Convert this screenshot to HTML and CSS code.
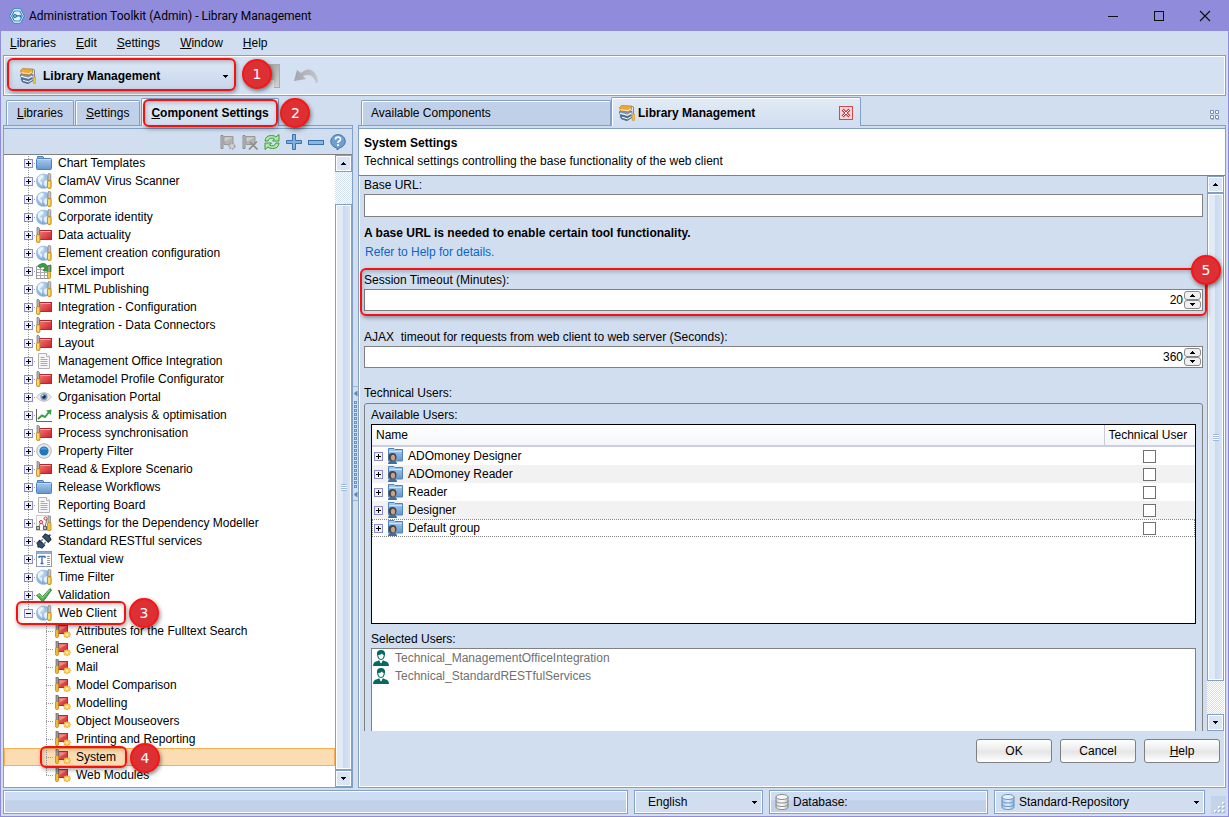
FILE: index.html
```html
<!DOCTYPE html>
<html lang="en">
<head>
<meta charset="utf-8">
<title>Administration Toolkit (Admin) - Library Management</title>
<link rel="stylesheet" href="styles.css">
</head>
<body>
<svg class="defs" aria-hidden="true">
  <defs>
    <linearGradient id="gBlue" x1="0" y1="0" x2="0" y2="1"><stop offset="0" stop-color="#a9cbec"/><stop offset="1" stop-color="#6397cd"/></linearGradient>
    <linearGradient id="gRed" x1="0" y1="0" x2="1" y2="1"><stop offset="0" stop-color="#f07a75"/><stop offset="1" stop-color="#cf1f2a"/></linearGradient>
    <radialGradient id="gGlobe" cx=".35" cy=".3" r=".8"><stop offset="0" stop-color="#c5dcf2"/><stop offset="1" stop-color="#6d9fd2"/></radialGradient>
    <linearGradient id="gGray" x1="0" y1="0" x2="1" y2="0"><stop offset="0" stop-color="#d8d8d8"/><stop offset=".5" stop-color="#fff"/><stop offset="1" stop-color="#c2c2c2"/></linearGradient>
    <linearGradient id="gDb" x1="0" y1="0" x2="1" y2="0"><stop offset="0" stop-color="#9fc2e6"/><stop offset=".5" stop-color="#e4f0fb"/><stop offset="1" stop-color="#8fb6de"/></linearGradient>
    <linearGradient id="gSave" x1="0" y1="0" x2="1" y2="1"><stop offset="0" stop-color="#8f8f8f"/><stop offset="1" stop-color="#d6d6d6"/></linearGradient>
    <linearGradient id="gUndo" x1="0" y1="0" x2="1" y2="0"><stop offset="0" stop-color="#a3a5a7"/><stop offset="1" stop-color="#c3c6c9"/></linearGradient>
  </defs>
  <symbol id="folder" viewBox="0 0 16 16"><path d="M1.500 4V1.500h5.500l1 2" fill="#8db7e2" stroke="#4d7fb8"/><rect x=".5" y="3.500" width="15" height="11" rx="1" fill="url(#gBlue)" stroke="#4f82bb"/><path d="M1.500 4.500h13" stroke="#c6def4"/></symbol>
  <symbol id="globe" viewBox="0 0 16 16"><circle cx="7.500" cy="8.300" r="7.300" fill="url(#gGlobe)" stroke="#9bbbdd" stroke-width=".6"/><path d="M2 4.500l3-2.500 3 .5-1 2.500-2 1-1 2 2 1v4l-2-2-2-3zM8.500 8l3-1v6l-2 1-2-3z" fill="#f4f9fd" opacity=".85"/><path d="M12 1l1-.6h.8l1 .8V8H12z" fill="#c4c4c4" stroke="#7d7d7d" stroke-width=".7"/><rect x="11.500" y="7.500" width="3.700" height="8" rx="1.200" fill="#f2c445" stroke="#bd871b" stroke-width=".8"/><path d="M13 9v5" stroke="#fff0a9"/></symbol>
  <symbol id="red" viewBox="0 0 16 16"><rect x="3.500" y="3.500" width="12" height="9" fill="url(#gRed)" stroke="#b9252c"/><path d="M4.500 4.500h10" stroke="#fab1ab"/><path d="M1 .5h1.500l1 1V8H1z" fill="#b5b5b5" stroke="#6d6d6d" stroke-width=".7"/><rect x=".5" y="7.500" width="3.500" height="8" rx="1.200" fill="#f0bd3a" stroke="#bd871b" stroke-width=".8"/><path d="M2 9v5" stroke="#fff0a9"/></symbol>
  <symbol id="redgear" viewBox="0 0 16 16"><rect x="3.500" y="2.500" width="9" height="8" fill="url(#gRed)" stroke="#b9252c"/><path d="M4.500 3.500h7l-7 4z" fill="#f08a84"/><path d="M1 0h1.500l1 1v6H1z" fill="#9a9a9a" stroke="#666" stroke-width=".7"/><rect x=".5" y="6.500" width="3" height="8" rx="1.200" fill="#efb935" stroke="#bd871b" stroke-width=".8"/><path d="M12 8.500l1 1 1.500-.3.2 1.300 1.100.9-1.100 1 .1 1.400-1.600.1-1.100 1.100-1.200-1.100-1.600.2v-1.500l-1.100-1.100 1.100-1.100.2-1.400 1.500.3z" fill="#fbd05c" stroke="#dba63c" stroke-width=".7"/><circle cx="12" cy="11.800" r="1" fill="#fff3c4"/></symbol>
  <symbol id="page" viewBox="0 0 16 16"><path d="M2.500.5h8l3 3v12h-11z" fill="#f6f6f6" stroke="#b3b3b3"/><path d="M10.500.5v3h3" fill="#fff" stroke="#b3b3b3"/><path d="M4.500 4.500h4m-4 2h7m-7 2h7m-7 2h7m-7 2h7" stroke="#aaa"/></symbol>
  <symbol id="eye" viewBox="0 0 16 16"><path d="M.5 8Q4 3.500 8 3.500T15.500 8Q12 12.500 8 12.500T.5 8z" fill="#ececec" stroke="#c4c4c4"/><circle cx="8" cy="7.800" r="3.600" fill="#7fa0c4"/><circle cx="8" cy="7.800" r="1.900" fill="#1d2b40"/><circle cx="6.800" cy="6.600" r=".8" fill="#fff"/></symbol>
  <symbol id="chart" viewBox="0 0 16 16"><path d="M.5 2v12.500H16" fill="none" stroke="#666"/><path d="M2 12l4-3.500 3 1.500 4-5" fill="none" stroke="#3ba047" stroke-width="2"/><path d="M10 3.500l5.500-1-.5 5.500z" fill="#3ba047"/></symbol>
  <symbol id="target" viewBox="0 0 16 16"><circle cx="8" cy="8" r="7.300" fill="#e8e8e8" stroke="#b5b5b5"/><circle cx="8" cy="8" r="4.600" fill="#1f76bd"/><path d="M4.500 6.500a4 4 0 0 1 7 0z" fill="#4e9fdb"/></symbol>
  <symbol id="excel" viewBox="0 0 16 16"><rect x=".5" y="3.500" width="12" height="12" fill="#fff" stroke="#999"/><path d="M1 6.500h11M1 9.500h11M1 12.500h11M4.500 5v10M8.500 5v10" stroke="#aaa"/><path d="M2 2.500Q9-2 11 3l4-1v7L7 7.500l2-2Q8 2.500 4 5z" fill="#38a044" stroke="#23752d" stroke-width=".7"/><path d="M12 3h2v6h-2z" fill="#aaa" stroke="#666" stroke-width=".6"/><rect x="11.500" y="8.500" width="3" height="7" rx="1" fill="#f2c445" stroke="#bd871b" stroke-width=".8"/></symbol>
  <symbol id="depend" viewBox="0 0 16 16"><path d="M.5.500h12v15H.5z" fill="#fafafa" stroke="#ccc"/><path d="M2 13l3-6 4 5 2-8" fill="none" stroke="#777"/><rect x=".5" y="11.500" width="3" height="3" fill="#bbb" stroke="#666"/><rect x="7.500" y="11.500" width="3" height="3" fill="#bbb" stroke="#666"/><circle cx="5" cy="7" r="1.500" fill="#fff" stroke="#d92a2a"/><circle cx="9.500" cy="3.500" r="1.500" fill="#fff" stroke="#d92a2a"/><path d="M12 1h2.500v7H12z" fill="#bbb" stroke="#777" stroke-width=".6"/><rect x="11.500" y="7.500" width="3.500" height="8" rx="1" fill="#f2c445" stroke="#bd871b" stroke-width=".8"/></symbol>
  <symbol id="plug" viewBox="0 0 16 16"><g transform="rotate(-45 8 8)"><path d="M-1 8h3M14 8h3" stroke="#355577" stroke-width="2"/><path d="M1.500 4.500h4v7h-4q-2-3.500 0-7zM10 4h4q2 4 0 8h-4z" fill="#34506f" stroke="#1f2d3f"/><path d="M5.500 6h3M5.500 10h3" stroke="#888" stroke-width="1.500"/></g></symbol>
  <symbol id="textual" viewBox="0 0 16 16"><rect x=".5" y=".5" width="15" height="15" fill="#fff" stroke="#8c9db0"/><path d="M1 2h14" stroke="#8cb0d7" stroke-width="2"/><path d="M3 5.500h6M6 5.500v7M4.500 12.500h3M3 5v2m6-2v2" stroke="#3f6da3" stroke-width="1.300"/><path d="M11 5.500h3m-3 2h3m-3 2h3m-3 2h3m-3 2h3" stroke="#999"/></symbol>
  <symbol id="check" viewBox="0 0 16 16"><path d="M.5 8.500l3-2 2.900 3.200L14 1.500l1.700 1.400L6.800 15z" fill="#4fae50" stroke="#2c7f34" stroke-width=".8"/><path d="M2 8.500l1.600-.8 2.900 3.500L13.500 3" fill="none" stroke="#a6dc9e" stroke-width=".9"/></symbol>
  <symbol id="ufolder" viewBox="0 0 16 16"><path d="M1.500 3V.5h5.500l1 1h7.500v11.500H1.500z" fill="url(#gBlue)" stroke="#4f82bb"/><path d="M2 3.500h13" stroke="#d2e5f7"/><path d="M1 16q0-3.500 4.500-3.500T10 16z" fill="#3e6f9e"/><circle cx="5.500" cy="9" r="4" fill="#4b4540"/><ellipse cx="6" cy="9.600" rx="2.100" ry="2.900" fill="#c8a283"/></symbol>
  <symbol id="user" viewBox="0 0 16 16"><path d="M4 4.500Q3.500 0 8 0t4 4.500Q11.500 9.700 8 10 4.500 9.700 4 4.500z" fill="#046a62"/><path d="M5.200 5q2.300 0 3.800-1.500Q10 5 10.800 5q-.5 3.800-2.800 4.100Q5.700 8.800 5.200 5z" fill="#fff"/><path d="M0 16q0-4 4-4.800l2-1L8 13l2-2.800 2 1q4 .8 4 4.800z" fill="#046a62"/><path d="M6.700 11.500L8 13.500l1.300-2z" fill="#fff"/></symbol>
  <symbol id="library" viewBox="0 0 16 16"><path d="M1 11l2-2 9.500 1.500v2.300L8 15.700 2.500 14z" fill="#54749f" stroke="#36547d" stroke-width=".6"/><path d="M3 12.300l5.500 1.500 4-2.300" fill="none" stroke="#fff" stroke-width="1"/><path d="M0 7l2.500-1.500 10.500 1v2l-4.500 3.300L1 9.500z" fill="#7c97ba" stroke="#40608d" stroke-width=".6"/><path d="M1 8.200l7.500 2L12.500 8" fill="none" stroke="#fff" stroke-width="1.100"/><path d="M.5 2.500l2-2L12.500 1v3.500L9.500 7 1.500 6z" fill="#f0a830" stroke="#a87224" stroke-width=".6"/><path d="M1.500 4.700l7.500 1 3-2" fill="none" stroke="#fff0c5" stroke-width="1"/><path d="M12.500 1l2 1v7" fill="none" stroke="#888"/><rect x="13.200" y="9" width="2.600" height="6.500" rx="1" fill="#f2c445" stroke="#bd871b" stroke-width=".6"/></symbol>
  <symbol id="dbgray" viewBox="0 0 16 16"><path d="M2 3v10q0 2.500 6 2.500t6-2.500V3" fill="url(#gGray)" stroke="#8a8a8a"/><ellipse cx="8" cy="3" rx="6" ry="2.500" fill="#f8f8f8" stroke="#8a8a8a"/><path d="M2 6.500Q2 9 8 9t6-2.500M2 10q0 2.500 6 2.500t6-2.500" fill="none" stroke="#8a8a8a"/></symbol>
  <symbol id="dbblue" viewBox="0 0 16 16"><path d="M2 3v10q0 2.500 6 2.500t6-2.500V3" fill="url(#gDb)" stroke="#6795c6"/><ellipse cx="8" cy="3" rx="6" ry="2.500" fill="#e6f1fb" stroke="#6795c6"/><path d="M2 6.500Q2 9 8 9t6-2.500M2 10q0 2.500 6 2.500t6-2.500" fill="none" stroke="#6795c6"/></symbol>
  <symbol id="toolgear" viewBox="0 0 16 16"><path d="M4 2.500h9v8H4z" fill="#b4b4b4" stroke="#999"/><path d="M4.500 3.500h8l-8 4z" fill="#cfcfcf"/><path d="M1 1.500h2v13H1z" fill="#c4c4c4" stroke="#8c8c8c"/><circle cx="12" cy="12" r="2.800" fill="#d0d0d0" stroke="#a2a2a2" stroke-dasharray="1.800 .8" stroke-width="1.500"/></symbol>
  <symbol id="tooldel" viewBox="0 0 16 16"><path d="M4 2.500h9v8H4z" fill="#b4b4b4" stroke="#999"/><path d="M4.500 3.500h8l-8 4z" fill="#cfcfcf"/><path d="M1 1.500h2v13H1z" fill="#c4c4c4" stroke="#8c8c8c"/><path d="M8 8l7.500 7.500M15 7.500L7 15.500" stroke="#8f8f8f" stroke-width="1.700"/></symbol>
  <symbol id="refresh" viewBox="0 0 16 16"><path d="M1 7Q1.500 1.500 7.500 1.500q3 0 4.500 1.500l3-2.500V7H8.500l2-2Q6 2.500 4 7z" fill="#b5e4a5" stroke="#3f9b44"/><path d="M15 9q-.5 5.500-6.500 5.500-3 0-4.500-1.500l-3 2.500V9h6.500l-2 2q4.500 2.500 6.500-2z" fill="#b5e4a5" stroke="#3f9b44"/></symbol>
  <symbol id="plus" viewBox="0 0 16 16"><path d="M6.500.500h3v6h6v3h-6v6h-3v-6h-6v-3h6z" fill="#7fb0df" stroke="#3c72ac"/></symbol>
  <symbol id="minus" viewBox="0 0 16 16"><rect x=".5" y="6.500" width="15" height="4" fill="#8ab8e3" stroke="#3c72ac"/></symbol>
  <symbol id="help" viewBox="0 0 16 16"><path d="M8 .5a7.500 6.800 0 0 1 2 13.300L7 16v-2A7.500 6.800 0 0 1 8 .5z" fill="#6d9fd2" stroke="#356698" stroke-width=".8"/><path d="M5.500 5.500Q5.500 3 8 3t2.500 2.200Q10.500 6.500 9 7.300 8 8 8 9" fill="none" stroke="#fff" stroke-width="1.700"/><circle cx="8" cy="11.200" r="1.100" fill="#fff"/></symbol>
</svg>

<div class="window">
  <header class="titlebar">
    <svg class="icon" viewBox="0 0 16 16"><path d="M4.500.8h7L15.300 8l-3.800 7.200h-7L.7 8z" fill="#fff" stroke="#2b83c4" stroke-width="1"/><path d="M5.200 3h5.600l2.500 5-2.500 5H5.200L2.700 8z" fill="#e4f1fa" stroke="#2b83c4" stroke-width="1.200"/><circle cx="6" cy="8" r="1.400" fill="none" stroke="#1b6ba8" stroke-width="1.200"/><path d="M7.500 7.800h4v1.700" fill="none" stroke="#1b6ba8" stroke-width="1.200"/></svg>
    <h1 class="title">Administration Toolkit (Admin) - Library Management</h1>
    <div class="winbuttons">
      <button type="button" aria-label="Minimize"><svg viewBox="0 0 12 12"><path d="M1 6.500h10" stroke="#111"/></svg></button>
      <button type="button" aria-label="Maximize"><svg viewBox="0 0 12 12"><rect x="1.500" y="1.500" width="9" height="9" fill="none" stroke="#111"/></svg></button>
      <button type="button" aria-label="Close"><svg viewBox="0 0 12 12"><path d="M1 1l10 10M11 1L1 11" stroke="#111" stroke-width="1.200"/></svg></button>
    </div>
  </header>

  <nav class="menubar">
    <button type="button"><u>L</u>ibraries</button>
    <button type="button"><u>E</u>dit</button>
    <button type="button"><u>S</u>ettings</button>
    <button type="button"><u>W</u>indow</button>
    <button type="button"><u>H</u>elp</button>
  </nav>

  <div class="toolbar">
    <div class="picker">
      <svg class="icon"><use href="#library"/></svg>
      <select class="plain bold" aria-label="Module"><option>Library Management</option></select>
      <span class="mark mark-picker"><b class="badge">1</b></span>
    </div>
    <button type="button" class="save" aria-label="Save"><svg viewBox="0 0 24 24"><rect x=".5" y=".5" width="23" height="23" fill="url(#gSave)" stroke="#aaa"/><path d="M6 16h12v8H6z" fill="#ddd"/></svg></button>
    <button type="button" class="undo" aria-label="Undo"><svg viewBox="0 0 26 18"><path d="M1 14L4 3l4 3Q16-1 22 6q3 4 3 9l-2 1Q20 5 10 9l3 3z" fill="url(#gUndo)"/></svg></button>
  </div>

  <main class="main">
    <section class="left">
      <div class="tabs" role="tablist">
        <button type="button" class="tab" role="tab"><u>L</u>ibraries</button>
        <button type="button" class="tab" role="tab"><u>S</u>ettings</button>
        <button type="button" class="tab active" role="tab" aria-selected="true"><span><u>C</u>omponent Settings</span><span class="mark mark-tab"><b class="badge">2</b></span></button>
      </div>
      <div class="panel">
        <div class="treetools">
          <button type="button" aria-label="Configure"><svg class="icon"><use href="#toolgear"/></svg></button>
          <button type="button" aria-label="Delete configuration"><svg class="icon"><use href="#tooldel"/></svg></button>
          <button type="button" aria-label="Refresh"><svg class="icon"><use href="#refresh"/></svg></button>
          <button type="button" aria-label="Expand all"><svg class="icon"><use href="#plus"/></svg></button>
          <button type="button" aria-label="Collapse all"><svg class="icon"><use href="#minus"/></svg></button>
          <button type="button" aria-label="Help"><svg class="icon"><use href="#help"/></svg></button>
        </div>
        <div class="treewrap">
          <ul class="tree">
            <li class="node"><button type="button" class="exp" aria-label="Expand"></button><svg class="icon"><use href="#folder"/></svg><span>Chart Templates</span></li>
            <li class="node"><button type="button" class="exp" aria-label="Expand"></button><svg class="icon"><use href="#globe"/></svg><span>ClamAV Virus Scanner</span></li>
            <li class="node"><button type="button" class="exp" aria-label="Expand"></button><svg class="icon"><use href="#globe"/></svg><span>Common</span></li>
            <li class="node"><button type="button" class="exp" aria-label="Expand"></button><svg class="icon"><use href="#globe"/></svg><span>Corporate identity</span></li>
            <li class="node"><button type="button" class="exp" aria-label="Expand"></button><svg class="icon"><use href="#red"/></svg><span>Data actuality</span></li>
            <li class="node"><button type="button" class="exp" aria-label="Expand"></button><svg class="icon"><use href="#globe"/></svg><span>Element creation configuration</span></li>
            <li class="node"><button type="button" class="exp" aria-label="Expand"></button><svg class="icon"><use href="#excel"/></svg><span>Excel import</span></li>
            <li class="node"><button type="button" class="exp" aria-label="Expand"></button><svg class="icon"><use href="#globe"/></svg><span>HTML Publishing</span></li>
            <li class="node"><button type="button" class="exp" aria-label="Expand"></button><svg class="icon"><use href="#red"/></svg><span>Integration - Configuration</span></li>
            <li class="node"><button type="button" class="exp" aria-label="Expand"></button><svg class="icon"><use href="#red"/></svg><span>Integration - Data Connectors</span></li>
            <li class="node"><button type="button" class="exp" aria-label="Expand"></button><svg class="icon"><use href="#red"/></svg><span>Layout</span></li>
            <li class="node"><button type="button" class="exp" aria-label="Expand"></button><svg class="icon"><use href="#page"/></svg><span>Management Office Integration</span></li>
            <li class="node"><button type="button" class="exp" aria-label="Expand"></button><svg class="icon"><use href="#red"/></svg><span>Metamodel Profile Configurator</span></li>
            <li class="node"><button type="button" class="exp" aria-label="Expand"></button><svg class="icon"><use href="#eye"/></svg><span>Organisation Portal</span></li>
            <li class="node"><button type="button" class="exp" aria-label="Expand"></button><svg class="icon"><use href="#chart"/></svg><span>Process analysis &amp; optimisation</span></li>
            <li class="node"><button type="button" class="exp" aria-label="Expand"></button><svg class="icon"><use href="#red"/></svg><span>Process synchronisation</span></li>
            <li class="node"><button type="button" class="exp" aria-label="Expand"></button><svg class="icon"><use href="#target"/></svg><span>Property Filter</span></li>
            <li class="node"><button type="button" class="exp" aria-label="Expand"></button><svg class="icon"><use href="#red"/></svg><span>Read &amp; Explore Scenario</span></li>
            <li class="node"><button type="button" class="exp" aria-label="Expand"></button><svg class="icon"><use href="#folder"/></svg><span>Release Workflows</span></li>
            <li class="node"><button type="button" class="exp" aria-label="Expand"></button><svg class="icon"><use href="#page"/></svg><span>Reporting Board</span></li>
            <li class="node"><button type="button" class="exp" aria-label="Expand"></button><svg class="icon"><use href="#depend"/></svg><span>Settings for the Dependency Modeller</span></li>
            <li class="node"><button type="button" class="exp" aria-label="Expand"></button><svg class="icon"><use href="#plug"/></svg><span>Standard RESTful services</span></li>
            <li class="node"><button type="button" class="exp" aria-label="Expand"></button><svg class="icon"><use href="#textual"/></svg><span>Textual view</span></li>
            <li class="node"><button type="button" class="exp" aria-label="Expand"></button><svg class="icon"><use href="#globe"/></svg><span>Time Filter</span></li>
            <li class="node"><button type="button" class="exp" aria-label="Expand"></button><svg class="icon"><use href="#check"/></svg><span>Validation</span></li>
            <li class="node last"><button type="button" class="exp open" aria-label="Collapse"></button><svg class="icon"><use href="#globe"/></svg><span>Web Client</span><span class="mark mark-client"><b class="badge">3</b></span></li>
            <li>
              <ul class="tree">
                <li class="leaf"><svg class="icon"><use href="#redgear"/></svg><span>Attributes for the Fulltext Search</span></li>
                <li class="leaf"><svg class="icon"><use href="#redgear"/></svg><span>General</span></li>
                <li class="leaf"><svg class="icon"><use href="#redgear"/></svg><span>Mail</span></li>
                <li class="leaf"><svg class="icon"><use href="#redgear"/></svg><span>Model Comparison</span></li>
                <li class="leaf"><svg class="icon"><use href="#redgear"/></svg><span>Modelling</span></li>
                <li class="leaf"><svg class="icon"><use href="#redgear"/></svg><span>Object Mouseovers</span></li>
                <li class="leaf"><svg class="icon"><use href="#redgear"/></svg><span>Printing and Reporting</span></li>
                <li class="leaf selected"><svg class="icon"><use href="#redgear"/></svg><span>System</span><span class="mark mark-system"><b class="badge">4</b></span></li>
                <li class="leaf last"><svg class="icon"><use href="#redgear"/></svg><span>Web Modules</span></li>
              </ul>
            </li>
          </ul>
          <div class="scroll">
            <button type="button" class="sbtn up" aria-label="Scroll up"></button>
            <div class="track gap-top"></div>
            <div class="thumb"><i class="grip"></i></div>
            <button type="button" class="sbtn down" aria-label="Scroll down"></button>
          </div>
        </div>
      </div>
    </section>

    <div class="splitter"><div class="handle"><i class="tri"></i><i class="dots"></i><i class="tri"></i></div></div>

    <section class="right">
      <div class="tabs" role="tablist">
        <button type="button" class="tab wide" role="tab">Available Components</button>
        <div class="tab wide active doc" role="tab" aria-selected="true">
          <svg class="icon"><use href="#library"/></svg><span>Library Management</span>
          <button type="button" class="close" aria-label="Close tab"><svg viewBox="0 0 14 14"><rect x=".5" y=".5" width="13" height="13" fill="#f6d6d8" stroke="#d0494f"/><path d="M3.500 3.500l7 7m0-7l-7 7" stroke="#c8363d" stroke-width="2.800"/><path d="M3.500 3.500l7 7m0-7l-7 7" stroke="#fff" stroke-width="1"/></svg></button>
        </div>
        <button type="button" class="layout" aria-label="Window layout"><svg viewBox="0 0 10 10"><path d="M.5.500h3v3h-3zM5.500.500h3v3h-3zM.5 5.500h3v3h-3zM5.500 5.500h3v3h-3z" fill="#fff" stroke="#7191bb"/><path d="M1 9.500h3M6 9.500h3.500" stroke="#b5b5b5"/></svg></button>
      </div>
      <div class="panel">
        <div class="intro"><h2>System Settings</h2><p>Technical settings controlling the base functionality of the web client</p></div>
        <div class="scroller">
          <form class="form">
            <label for="url">Base URL:</label>
            <input id="url" class="field" type="text">
            <p class="hint bold">A base URL is needed to enable certain tool functionality.</p>
            <a class="link" href="#help">Refer to Help for details.</a>
            <div class="timeout">
              <label for="session">Session Timeout (Minutes):</label>
              <div class="spin"><input id="session" type="text" inputmode="numeric" value="20"><span class="arrows"><button type="button" class="up" aria-label="Increase"></button><button type="button" class="down" aria-label="Decrease"></button></span></div>
              <span class="mark mark-timeout"><b class="badge">5</b></span>
            </div>
            <div class="timeout ajax">
              <label for="ajax">AJAX&nbsp; timeout for requests from web client to web server (Seconds):</label>
              <div class="spin"><input id="ajax" type="text" inputmode="numeric" value="360"><span class="arrows"><button type="button" class="up" aria-label="Increase"></button><button type="button" class="down" aria-label="Decrease"></button></span></div>
            </div>
            <p class="caption">Technical Users:</p>
            <div class="group">
              <p class="sub">Available Users:</p>
              <div class="tablebox">
                <table class="users">
                  <thead><tr><th>Name</th><th class="tech">Technical User</th></tr></thead>
                  <tbody>
                    <tr><td><div class="cell"><button type="button" class="exp" aria-label="Expand"></button><svg class="icon"><use href="#ufolder"/></svg><label for="u1">ADOmoney Designer</label></div></td><td class="tick"><input id="u1" type="checkbox"></td></tr>
                    <tr><td><div class="cell"><button type="button" class="exp" aria-label="Expand"></button><svg class="icon"><use href="#ufolder"/></svg><label for="u2">ADOmoney Reader</label></div></td><td class="tick"><input id="u2" type="checkbox"></td></tr>
                    <tr><td><div class="cell"><button type="button" class="exp" aria-label="Expand"></button><svg class="icon"><use href="#ufolder"/></svg><label for="u3">Reader</label></div></td><td class="tick"><input id="u3" type="checkbox"></td></tr>
                    <tr><td><div class="cell"><button type="button" class="exp" aria-label="Expand"></button><svg class="icon"><use href="#ufolder"/></svg><label for="u4">Designer</label></div></td><td class="tick"><input id="u4" type="checkbox"></td></tr>
                    <tr class="focus"><td><div class="cell"><button type="button" class="exp" aria-label="Expand"></button><svg class="icon"><use href="#ufolder"/></svg><label for="u5">Default group</label></div></td><td class="tick"><input id="u5" type="checkbox"></td></tr>
                  </tbody>
                </table>
              </div>
              <p class="sub second">Selected Users:</p>
              <ul class="chosen">
                <li><svg class="icon"><use href="#user"/></svg><span>Technical_ManagementOfficeIntegration</span></li>
                <li><svg class="icon"><use href="#user"/></svg><span>Technical_StandardRESTfulServices</span></li>
              </ul>
            </div>
          </form>
          <div class="scroll">
            <button type="button" class="sbtn up" aria-label="Scroll up"></button>
            <div class="thumb"><i class="grip"></i></div>
            <div class="track gap-bottom"></div>
            <button type="button" class="sbtn down" aria-label="Scroll down"></button>
          </div>
        </div>
        <div class="actions">
          <button type="button" class="btn">OK</button>
          <button type="button" class="btn">Cancel</button>
          <button type="button" class="btn"><u>H</u>elp</button>
        </div>
      </div>
    </section>
  </main>

  <footer class="status">
    <div class="slot message"></div>
    <div class="slot light language"><select class="plain" aria-label="Language"><option>English</option></select></div>
    <div class="slot database"><svg class="icon"><use href="#dbgray"/></svg><span>Database:</span></div>
    <div class="slot light repository"><svg class="icon"><use href="#dbblue"/></svg><select class="plain" aria-label="Repository"><option>Standard-Repository</option></select></div>
    <svg class="corner" viewBox="0 0 15 18"><path d="M11 6h2v2h-2zM7 10h2v2H7zM11 10h2v2h-2zM3 14h2v2H3zM7 14h2v2H7zM11 14h2v2h-2z" fill="#fff"/><path d="M12 7h2v2h-2zM8 11h2v2H8zM12 11h2v2h-2zM4 15h2v2H4zM8 15h2v2H8zM12 15h2v2h-2z" fill="#8eacd1" opacity=".6"/></svg>
  </footer>
</div>
</body>
</html>
```
FILE: styles.css
```css
* { box-sizing: border-box; }
body, h1, h2, p, ul { margin: 0; padding: 0; }
ul { list-style: none; }
body {
  font: 12px/18px "Liberation Sans", Arial, sans-serif;
  color: #000;
  background: #d1deef;
  overflow: hidden;
}
button, input, select { font: inherit; color: inherit; }
button { padding: 0; border: 0; background: none; border-radius: 0; }
svg { display: block; flex: none; }
.defs { position: absolute; width: 0; height: 0; }
.icon { width: 16px; height: 16px; }
.bold { font-weight: bold; }
.save svg, .undo svg, .close svg, .layout svg { width: 100%; height: 100%; }

.window {
  display: flex;
  flex-direction: column;
  height: 100vh;
  border: 1px solid #918bdb;
  border-top: 0;
}
.titlebar {
  display: flex;
  align-items: center;
  gap: 4px;
  flex: none;
  height: 31px;
  padding-left: 8px;
  background: #918bdb;
}
.title { flex: 1; font: 12px/18px Roboto, "Segoe UI", sans-serif; }
.winbuttons { display: flex; }
.winbuttons button { display: grid; place-items: center; width: 46px; height: 31px; }
.winbuttons svg { width: 12px; height: 12px; }

.menubar { display: flex; gap: 20px; flex: none; height: 24px; padding: 0 9px; }

.toolbar {
  display: flex;
  align-items: center;
  flex: none;
  height: 41px;
  margin: 0 2px;
  border: 1px solid #829fc5;
  box-shadow: inset 0 0 0 1px #fff;
  background: #d3e1f2;
}
.picker {
  position: relative;
  display: flex;
  align-items: center;
  gap: 3px;
  width: 224px;
  height: 30px;
  margin-left: 7px;
  padding: 0 2px 0 9px;
  background: linear-gradient(#dde8f5, #c5d5ea);
}
.plain {
  flex: 1;
  min-width: 0;
  height: 20px;
  padding: 0 4px;
  border: 0;
  appearance: none;
  background:
    linear-gradient(#000, #000) right 5px top 9px / 5px 1px no-repeat,
    linear-gradient(#000, #000) right 6px top 10px / 3px 1px no-repeat,
    linear-gradient(#000, #000) right 7px top 11px / 1px 1px no-repeat;
}
.save { width: 24px; height: 24px; margin-left: 21px; }
.undo { width: 26px; height: 18px; margin-left: 13px; }

.mark {
  position: absolute;
  border: 2px solid #fa0f0f;
  border-radius: 6px;
  box-shadow: 1px 2px 4px rgba(0, 0, 0, .35), inset 1px 2px 4px rgba(0, 0, 0, .2);
  pointer-events: none;
  z-index: 2;
}
.badge {
  position: absolute;
  display: grid;
  place-items: center;
  width: 30px;
  height: 30px;
  border: 2px solid #fa1414;
  border-radius: 50%;
  background: #dd3035;
  box-shadow: 1px 2px 4px rgba(0, 0, 0, .5);
  color: #fff;
  font: 14px/20px "DejaVu Sans", sans-serif;
}
.mark-picker { inset: -3px -1px 0 -4px; }
.mark-picker .badge { left: 233px; top: -1px; }
.mark-tab { inset: 0 0 -1px 1px; }
.mark-tab .badge { left: 135px; top: -3px; }
.mark-client { left: 12px; top: -3px; width: 110px; height: 24px; }
.mark-client .badge { left: 111px; top: -5px; }
.mark-system { left: 36px; top: -2px; width: 87px; height: 22px; }
.mark-system .badge { left: 88px; top: -5px; }
.mark-timeout { inset: -3px -4px -5px; }
.mark-timeout .badge { right: -16px; top: -15px; }

.main { display: flex; flex: 1; min-height: 0; padding: 2px 2px 0; }
.left { display: flex; flex-direction: column; flex: none; width: 350px; }
.right { display: flex; flex-direction: column; flex: 1; min-width: 0; }
.tabs { display: flex; align-items: flex-end; flex: none; height: 27px; padding-left: 3px; }
.tab {
  height: 25px;
  padding: 0 10px;
  border: 1px solid #829fc5;
  border-bottom: 0;
  border-radius: 2px 2px 0 0;
  box-shadow: inset 1px 1px 0 #fff;
  background: #bfd0e8;
  text-align: left;
}
.tab.active {
  position: relative;
  height: 28px;
  margin-bottom: -1px;
  background: linear-gradient(#e2ecf7, #d1deef);
  font-weight: bold;
  z-index: 1;
}
.left .tab + .tab { margin-left: 1px; }
.left .tab.active { padding: 0 9px; }
.wide { width: 250px; padding: 0 9px; }
.tab.doc { display: flex; align-items: center; gap: 3px; height: 29px; padding: 1px 7px 0; }
.close { width: 14px; height: 14px; margin-left: auto; }
.layout { width: 10px; height: 10px; margin: 0 6px 5px auto; }

.panel {
  display: flex;
  flex-direction: column;
  flex: 1;
  min-height: 0;
  border: 1px solid #829fc5;
  box-shadow: inset 0 0 0 1px #fff;
}
.left .panel { box-shadow: none; }
.panel::before { content: ""; flex: none; height: 2px; border-bottom: 1px solid #829fc5; background: #d1deef; }
.treetools {
  display: flex;
  align-items: center;
  justify-content: flex-end;
  gap: 6px;
  flex: none;
  height: 26px;
  padding-right: 6px;
  border-bottom: 1px solid #808080;
}
.treewrap { display: flex; flex: 1; min-height: 0; background: #fff; }
.treewrap > .tree { flex: 1; margin-top: -1px; }
.node, .leaf { position: relative; display: flex; align-items: center; height: 18px; white-space: nowrap; }
.node {
  gap: 6px;
  padding-left: 20px;
  background:
    repeating-linear-gradient(#999 0 1px, transparent 1px 2px) 24px 0 / 1px 100% no-repeat,
    repeating-linear-gradient(90deg, #999 0 1px, transparent 1px 2px) 28px 9px / 4px 1px no-repeat;
}
.node.last { background-size: 1px 9px, 4px 1px; }
.node .exp { margin-right: -3px; }
.leaf {
  gap: 5px;
  padding-left: 51px;
  background:
    repeating-linear-gradient(#999 0 1px, transparent 1px 2px) 42px 0 / 1px 100% no-repeat,
    repeating-linear-gradient(90deg, #999 0 1px, transparent 1px 2px) 42px 9px / 8px 1px no-repeat;
}
.leaf.last { background-size: 1px 9px, 8px 1px; }
.leaf.selected { background-color: #fcdcb3; box-shadow: inset 0 0 0 1px #f9ae50; }
.exp {
  flex: none;
  width: 9px;
  height: 9px;
  border: 1px solid #8b89cf;
  background:
    linear-gradient(#000, #000) center / 5px 1px no-repeat,
    linear-gradient(#000, #000) center / 1px 5px no-repeat,
    #eef0fa;
}
.exp.open { background: linear-gradient(#000, #000) center / 5px 1px no-repeat, #eef0fa; }

.scroll { display: flex; flex-direction: column; flex: none; width: 17px; }
.sbtn, .thumb { border: 1px solid #829fc5; box-shadow: inset 0 0 0 1px #fff; }
.sbtn { flex: none; height: 17px; }
.up {
  background:
    linear-gradient(#000, #000) center top 6px / 1px 1px no-repeat,
    linear-gradient(#000, #000) center top 7px / 3px 1px no-repeat,
    linear-gradient(#000, #000) center top 8px / 5px 1px no-repeat, #d9e5f4;
}
.down {
  background:
    linear-gradient(#000, #000) center top 6px / 5px 1px no-repeat,
    linear-gradient(#000, #000) center top 7px / 3px 1px no-repeat,
    linear-gradient(#000, #000) center top 8px / 1px 1px no-repeat, #d9e5f4;
}
.thumb { display: grid; place-items: center; flex: 1; background: linear-gradient(90deg, #e1ebf8 45%, #cbdaef 50%, #d9e5f4); }
.grip { width: 6px; height: 7px; background: repeating-linear-gradient(#9db8d9 0 1px, #fff 1px 2px); }
.track { background: repeating-conic-gradient(#d3e0f1 0 25%, #fff 0 50%) 0 0 / 2px 2px; }
.gap-top { height: 32px; }
.gap-bottom { height: 33px; }

.splitter { display: flex; flex: none; align-items: center; width: 5px; }
.handle {
  display: flex;
  flex-direction: column;
  align-items: center;
  justify-content: space-between;
  width: 5px;
  height: 115px;
  padding: 4px 0 2px;
  border: solid #9db5d4;
  border-width: 1px 0;
}
.tri { width: 4px; height: 6px; background: #5f87ba; clip-path: polygon(100% 0, 0 50%, 100% 100%); }
.dots {
  width: 3px;
  height: 87px;
  background:
    repeating-linear-gradient(transparent 0 1px, #d1deef 1px 2px, transparent 2px 4px) center / 1px 100% no-repeat,
    repeating-linear-gradient(#6d91c1 0 3px, #d1deef 3px 4px);
}

.intro { flex: none; height: 47px; padding: 5px; border-bottom: 1px solid #808080; background: #fff; }
.intro h2 { font: inherit; font-weight: bold; }
.scroller { display: flex; flex: 1; min-height: 0; margin: 0 1px; overflow: hidden; }
.form { flex: 1; min-width: 0; padding: 0 4px; }
.form label, .caption, .sub { display: block; }
.field, .spin { width: 100%; border: 1px solid #808080; background: #fff; }
.field { display: block; height: 23px; }
.hint { margin-top: 7px; }
.link { display: block; width: max-content; margin: 1px 0 0 1px; color: #0a64cf; text-decoration: none; }
.timeout { position: relative; margin-top: 10px; }
.ajax { margin-top: 17px; }
.spin { display: flex; align-items: center; height: 22px; padding: 0 1px; }
.spin input { flex: 1; min-width: 0; height: 20px; padding: 0 1px 0 0; border: 0; outline: 0; background: none; text-align: right; }
.arrows { display: flex; flex-direction: column; width: 17px; height: 18px; }
.arrows button { flex: 1; border: 1px solid #8a8a8a; border-radius: 3px; background-color: #f0f0f0; background-position: center top 2px, center top 3px, center top 4px; }
.caption { margin-top: 16px; }
.group { margin-top: 1px; padding: 2px 6px; height: 360px; border: 1px solid #808080; border-radius: 3px; }
.tablebox { height: 200px; border: 1px solid #000; background: #fff; }
.users { width: 100%; border-collapse: collapse; }
.users th, .users td { height: 18px; padding: 0; font-weight: normal; text-align: left; }
.users th { height: 21px; padding: 0 4px; border-bottom: 2px solid #cdcedd; background: linear-gradient(#fff, #f4f6fb); }
.users .tech { width: 91px; border-left: 1px solid #c8cad8; white-space: nowrap; }
.users tbody tr:nth-child(even) { background: #f2f2f2; }
.users .focus { outline: 1px dotted #888; outline-offset: -1px; }
.cell { display: flex; align-items: center; gap: 4px; height: 18px; padding-left: 2px; }
.cell .icon { margin-right: 1px; }
.users .tick { text-align: center; }
.tick input { display: block; width: 13px; height: 13px; margin: 0 auto; appearance: none; border: 1px solid #707070; background: #fff; }
.second { margin-top: 6px; }
.chosen { height: 120px; border: 1px solid #808080; background: #fff; color: #707070; }
.chosen li { display: flex; align-items: center; gap: 6px; height: 18px; padding-left: 1px; }

.actions { display: flex; gap: 8px; justify-content: flex-end; flex: none; height: 56px; padding: 8px 5px; }
.btn {
  width: 76px;
  height: 24px;
  border: 1px solid #7f7f7f;
  border-radius: 3px;
  background: linear-gradient(#fff, #e9e9e9 50%, #e4e4e4 51%, #fff);
}

.status { display: flex; gap: 6px; flex: none; height: 28px; padding: 2px; }
.slot {
  display: flex;
  align-items: center;
  gap: 3px;
  height: 24px;
  padding: 0 4px;
  border: 1px solid #829fc5;
  box-shadow: inset 0 0 0 1px #fff;
  background: linear-gradient(#cdddf3 40%, #c0d1e9 45%);
}
.light { background: #d1deef; }
.slot .plain { padding: 0; background-position: right 1px top 9px, right 2px top 10px, right 3px top 11px; }
.message { flex: 1; }
.language { width: 129px; padding-left: 13px; }
.database { width: 219px; }
.repository { width: 211px; padding-left: 5px; }
.corner { width: 15px; height: 18px; margin-top: 6px; background: #c2d3ea; }
```
